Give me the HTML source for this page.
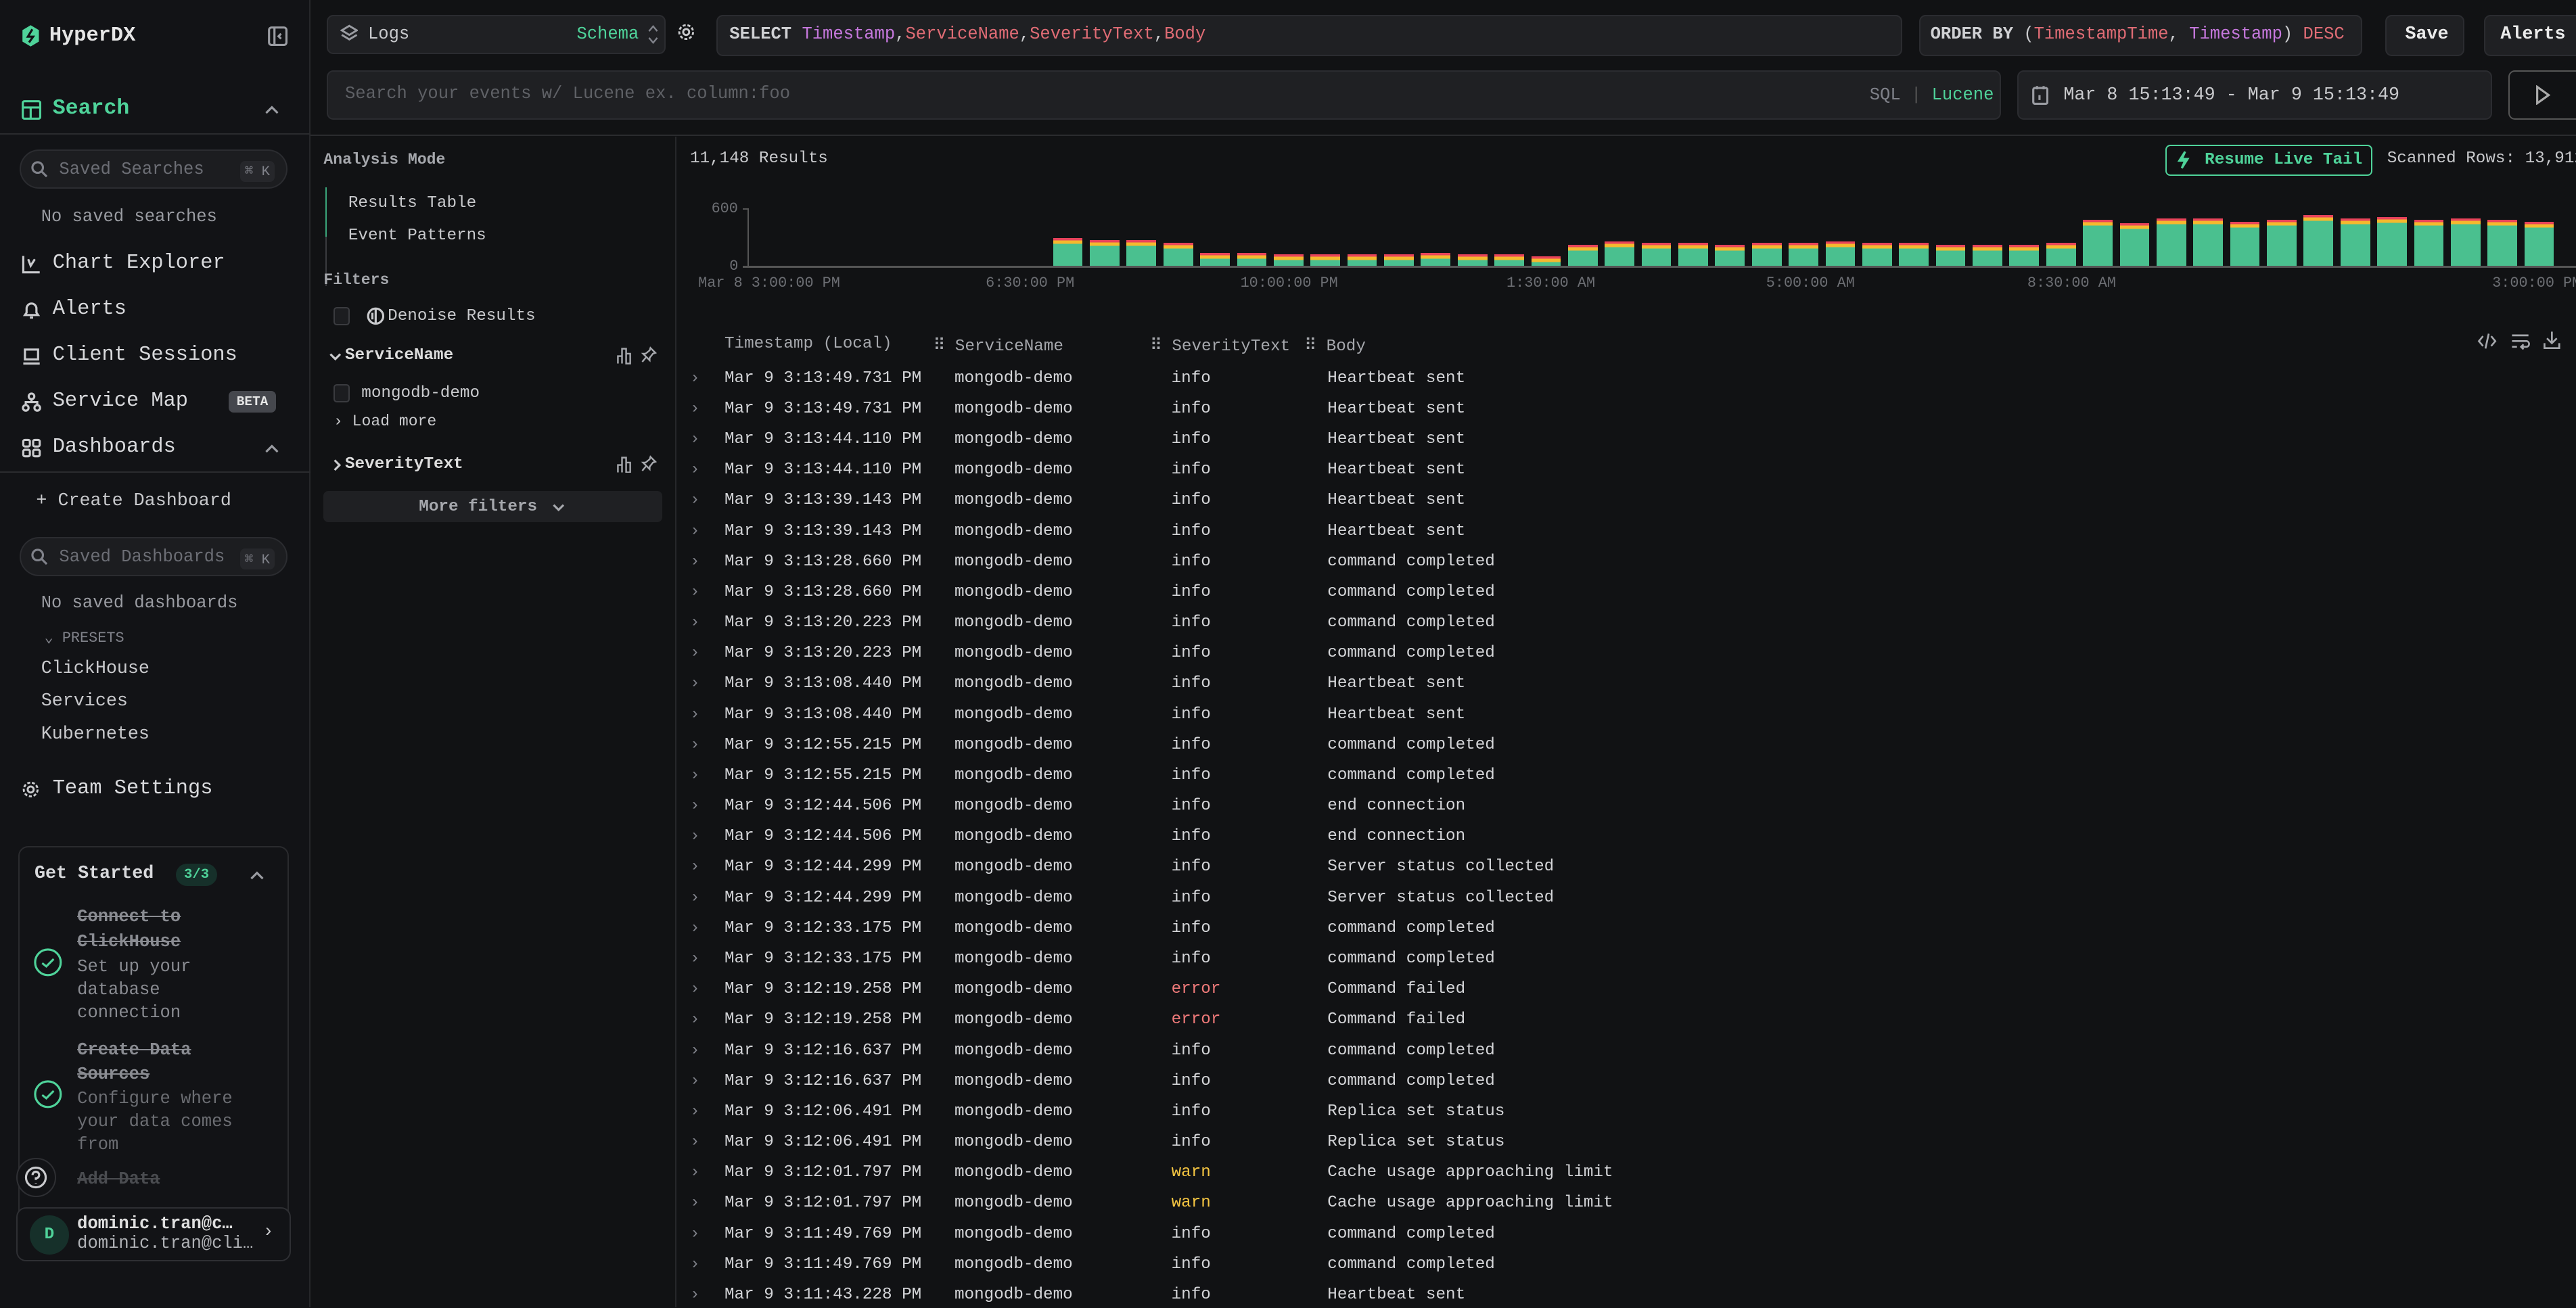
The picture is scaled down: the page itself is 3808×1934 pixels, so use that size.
<!DOCTYPE html>
<html><head><meta charset="utf-8"><style>
*{box-sizing:border-box;margin:0;padding:0}
html,body{width:3808px;height:1934px;overflow:hidden;background:#111214}
#w{zoom:2.4286;width:1568px;height:796px;position:relative;font-family:"Liberation Mono",monospace;font-size:11px;color:#c9cacd;background:#111214;overflow:hidden}
.a{position:absolute;white-space:nowrap}
.box{position:absolute;background:#1f2023;border:1px solid #2b2c30;border-radius:4px}
.g{color:#4fd39a}.m{color:#80828a}.r{color:#e06c75}.p{color:#c678dd}
.row{position:absolute;left:412px;width:1156px;height:18.6px;line-height:18.6px;font-size:10px;color:#d4d5d8}
.row span{position:absolute}
.bars{position:absolute;left:641px;top:120px;height:42px;display:flex;align-items:flex-end;gap:4.4px}
.bars div{width:18px;background:linear-gradient(#e8435a 0 1.5px,#f5b92e 1.5px 3.5px,#4ac08f 3.5px)}
svg{position:absolute;fill:none;stroke:currentColor;stroke-width:1.3}
</style></head><body><div id="w">
<!-- sidebar -->
<div class="a" style="left:0;top:0;width:189px;height:796px;background:#121316;border-right:1px solid #26272a"></div>
<svg style="left:13px;top:15px;width:11px;height:14px;color:#4fd39a" viewBox="0 0 11 14"><path d="M5.5 0.5L10.5 3.5V10.5L5.5 13.5L0.5 10.5V3.5Z" fill="#4fd39a" stroke="none"/><path d="M6.5 3L3.8 7.5H7L4.5 11" stroke="#121316" stroke-width="1.3"/></svg>
<div class="a" style="left:30px;top:15px;font-weight:bold;font-size:12.5px;color:#e6e6e6">HyperDX</div>
<svg style="left:163px;top:16px;width:12px;height:12px;color:#9a9ca2" viewBox="0 0 12 12"><rect x="0.7" y="0.7" width="10.6" height="10.6" rx="1.5"/><path d="M4 1V11M8 4.5L6.5 6L8 7.5"/></svg>
<svg style="left:13px;top:61px;width:12px;height:12px;color:#4fd39a" viewBox="0 0 12 12"><rect x="0.7" y="0.7" width="10.6" height="10.6" rx="1"/><path d="M1 4.5H11M5.5 4.5V11"/></svg>
<div class="a g" style="left:32px;top:59px;font-size:13px;font-weight:bold">Search</div>
<svg style="left:161px;top:64px;width:9px;height:6px;color:#9a9ca2" viewBox="0 0 9 6"><path d="M1 5L4.5 1.5L8 5"/></svg>
<div class="a" style="left:0;top:81px;width:189px;border-top:1px solid #2a2b2e"></div>
<div class="a" style="left:12px;top:91px;width:163px;height:24px;border-radius:12px;background:#1c1d20;border:1px solid #2b2c30"></div>
<svg style="left:19px;top:98px;width:10px;height:10px;color:#80828a" viewBox="0 0 10 10"><circle cx="4" cy="4" r="3.2"/><path d="M6.5 6.5L9.5 9.5"/></svg>
<div class="a m" style="left:36px;top:97px;font-size:10.5px;color:#6c6e75">Saved Searches</div>
<div class="a m" style="left:146px;top:98px;font-size:8.5px;background:#26272b;padding:1px 3px;border-radius:3px">⌘ K</div>
<div class="a m" style="left:25px;top:126px;font-size:10.5px;color:#9a9ca2">No saved searches</div>
<div class="a" style="left:32px;top:153px;font-size:12.5px;color:#d8d9dc">Chart Explorer</div>
<div class="a" style="left:32px;top:181px;font-size:12.5px;color:#d8d9dc">Alerts</div>
<div class="a" style="left:32px;top:209px;font-size:12.5px;color:#d8d9dc">Client Sessions</div>
<div class="a" style="left:32px;top:237px;font-size:12.5px;color:#d8d9dc">Service Map</div>
<div class="a" style="left:139px;top:238px;font-size:8px;font-weight:bold;background:#45474d;color:#e6e6e6;padding:2px 5px;border-radius:3px">BETA</div>
<div class="a" style="left:32px;top:265px;font-size:12.5px;color:#d8d9dc">Dashboards</div>
<svg style="left:161px;top:270px;width:9px;height:6px;color:#9a9ca2" viewBox="0 0 9 6"><path d="M1 5L4.5 1.5L8 5"/></svg>
<svg style="left:13px;top:155px;width:12px;height:12px;color:#c9cacd" viewBox="0 0 12 12"><path d="M1 1V11H11M4 3L5.5 7L8 3"/></svg>
<svg style="left:13px;top:183px;width:12px;height:12px;color:#c9cacd" viewBox="0 0 12 12"><path d="M2 9H10L9 7.5V5A3 3 0 0 0 3 5V7.5ZM5 10.5H7"/></svg>
<svg style="left:13px;top:211px;width:12px;height:12px;color:#c9cacd" viewBox="0 0 12 12"><rect x="2" y="2" width="8" height="6"/><path d="M1 10.5H11"/></svg>
<svg style="left:13px;top:239px;width:12px;height:12px;color:#c9cacd" viewBox="0 0 12 12"><circle cx="6" cy="2.5" r="1.7"/><circle cx="2.5" cy="9.5" r="1.7"/><circle cx="9.5" cy="9.5" r="1.7"/><path d="M6 4.2V6M2.5 7.8V6H9.5V7.8"/></svg>
<svg style="left:13px;top:267px;width:12px;height:12px;color:#c9cacd" viewBox="0 0 12 12"><rect x="1" y="1" width="4" height="4" rx="1"/><rect x="7" y="1" width="4" height="4" rx="1"/><rect x="1" y="7" width="4" height="4" rx="1"/><rect x="7" y="7" width="4" height="4" rx="1"/></svg>
<div class="a" style="left:0;top:287px;width:189px;border-top:1px solid #2a2b2e"></div>
<div class="a" style="left:22px;top:299px;font-size:11px">+ Create Dashboard</div>
<div class="a" style="left:12px;top:327px;width:163px;height:24px;border-radius:12px;background:#1c1d20;border:1px solid #2b2c30"></div>
<svg style="left:19px;top:334px;width:10px;height:10px;color:#80828a" viewBox="0 0 10 10"><circle cx="4" cy="4" r="3.2"/><path d="M6.5 6.5L9.5 9.5"/></svg>
<div class="a" style="left:36px;top:333px;font-size:10.5px;color:#6c6e75">Saved Dashboards</div>
<div class="a m" style="left:146px;top:334px;font-size:8.5px;background:#26272b;padding:1px 3px;border-radius:3px">⌘ K</div>
<div class="a" style="left:25px;top:361px;font-size:10.5px;color:#9a9ca2">No saved dashboards</div>
<div class="a m" style="left:27px;top:383px;font-size:9px">⌄ PRESETS</div>
<div class="a" style="left:25px;top:401px;font-size:11px">ClickHouse</div>
<div class="a" style="left:25px;top:421px;font-size:11px">Services</div>
<div class="a" style="left:25px;top:441px;font-size:11px">Kubernetes</div>
<svg style="left:13px;top:475px;width:11px;height:11px;color:#c9cacd" viewBox="0 0 12 12"><circle cx="6" cy="6" r="2"/><circle cx="6" cy="6" r="4.6" stroke-dasharray="2 1.2"/></svg>
<div class="a" style="left:32px;top:473px;font-size:12.5px;color:#d8d9dc">Team Settings</div>
<div class="a" style="left:11px;top:515px;width:165px;height:230px;border:1px solid #2a2b2e;border-radius:6px;border-bottom:none"></div>
<div class="a" style="left:21px;top:526px;font-size:11px;font-weight:bold;color:#d8d9dc">Get Started</div>
<div class="a g" style="left:107px;top:526px;font-size:8.5px;font-weight:bold;background:#16302a;padding:2px 5px;border-radius:8px">3/3</div>
<svg style="left:152px;top:530px;width:9px;height:6px;color:#9a9ca2" viewBox="0 0 9 6"><path d="M1 5L4.5 1.5L8 5"/></svg>
<svg style="left:20px;top:577px;width:18px;height:18px;color:#4fd39a" viewBox="0 0 18 18"><circle cx="9" cy="9" r="7.8"/><path d="M5.5 9.5L8 11.5L12.5 7"/></svg>
<svg style="left:20px;top:657px;width:18px;height:18px;color:#4fd39a" viewBox="0 0 18 18"><circle cx="9" cy="9" r="7.8"/><path d="M5.5 9.5L8 11.5L12.5 7"/></svg>
<div class="a" style="left:47px;top:551px;font-size:10.5px;line-height:15px;font-weight:bold;color:#8a8c92;text-decoration:line-through">Connect to<br>ClickHouse</div>
<div class="a" style="left:47px;top:582px;font-size:10.5px;line-height:14px;color:#8a8c92">Set up your<br>database<br>connection</div>
<div class="a" style="left:47px;top:632px;font-size:10.5px;line-height:15px;font-weight:bold;color:#8a8c92;text-decoration:line-through">Create Data<br>Sources</div>
<div class="a" style="left:47px;top:662px;font-size:10.5px;line-height:14px;color:#6c6e73">Configure where<br>your data comes<br>from</div>
<div class="a" style="left:47px;top:712px;font-size:10.5px;font-weight:bold;color:#4a4c50;text-decoration:line-through">Add Data</div>
<div class="a" style="left:10px;top:705px;width:24px;height:24px;border:1px solid #2e2f33;border-radius:12px;background:#121316"></div>
<svg style="left:15px;top:710px;width:14px;height:14px;color:#c9cacd" viewBox="0 0 14 14"><circle cx="7" cy="7" r="6"/><path d="M5 5.5A2 2 0 1 1 7 7.5V8.5M7 10.3V10.6"/></svg>
<div class="a" style="left:10px;top:735px;width:167px;height:33px;border:1px solid #2e2f33;border-radius:6px;background:#121316"></div>
<div class="a g" style="left:18px;top:740px;width:24px;height:24px;border-radius:12px;background:#16302a;text-align:center;line-height:24px;font-size:10px;font-weight:bold">D</div>
<div class="a" style="left:47px;top:739px;font-size:10.5px;font-weight:bold;color:#e0e0e0">dominic.tran@c…</div>
<div class="a" style="left:47px;top:751px;font-size:10.5px;color:#b0b2b6">dominic.tran@cli…</div>
<div class="a" style="left:160px;top:744px;color:#c9cacd">›</div>
<!-- top bar -->
<div class="box" style="left:199px;top:9px;width:206px;height:24px"></div>
<svg style="left:207px;top:15px;width:11px;height:11px;color:#9a9ca2" viewBox="0 0 12 12"><path d="M6 1L11 4L6 7L1 4ZM1 7L6 10L11 7"/></svg>
<div class="a" style="left:224px;top:15px;font-size:10.5px">Logs</div>
<div class="a g" style="left:351px;top:15px;font-size:10.5px">Schema</div>
<svg style="left:394px;top:14px;width:7px;height:14px;color:#80828a;stroke-width:1" viewBox="0 0 7 14"><path d="M1 5L3.5 2L6 5M1 9L3.5 12L6 9"/></svg>
<svg style="left:412px;top:14px;width:11px;height:11px;color:#c9cacd" viewBox="0 0 12 12"><circle cx="6" cy="6" r="2"/><circle cx="6" cy="6" r="4.6" stroke-dasharray="2 1.2"/></svg>
<div class="box" style="left:436px;top:9px;width:722px;height:25px"></div>
<div class="a" style="left:444px;top:15px;font-size:10.5px"><b style="color:#d0d1d4">SELECT</b> <span class="p">Timestamp</span>,<span class="r">ServiceName</span>,<span class="r">SeverityText</span>,<span class="r">Body</span></div>
<div class="box" style="left:1168px;top:9px;width:270px;height:25px"></div>
<div class="a" style="left:1175px;top:15px;font-size:10.5px"><b style="color:#d0d1d4">ORDER BY</b> (<span class="r">TimestampTime</span>, <span class="p">Timestamp</span>) <span class="r">DESC</span></div>
<div class="box" style="left:1452px;top:9px;width:48px;height:25px"></div>
<div class="a" style="left:1464px;top:15px;font-weight:bold;color:#ececec">Save</div>
<div class="box" style="left:1512px;top:9px;width:70px;height:25px"></div>
<div class="a" style="left:1522px;top:15px;font-weight:bold;color:#ececec">Alerts</div>
<div class="box" style="left:199px;top:43px;width:1019px;height:30px"></div>
<div class="a" style="left:210px;top:51px;font-size:10.5px;color:#5f6166">Search your events w/ Lucene ex. column:foo</div>
<div class="a" style="left:1138px;top:52px;font-size:10.5px"><span class="m">SQL</span> <span style="color:#555">|</span> <span class="g">Lucene</span></div>
<div class="box" style="left:1228px;top:43px;width:289px;height:30px"></div>
<svg style="left:1237px;top:52px;width:10px;height:12px;color:#9a9ca2" viewBox="0 0 10 12"><rect x="0.7" y="1.7" width="8.6" height="9.6" rx="1"/><path d="M3 0.5V2.5M7 0.5V2.5M4.5 6V9"/></svg>
<div class="a" style="left:1256px;top:52px;font-size:11px">Mar 8 15:13:49 - Mar 9 15:13:49</div>
<div class="a" style="left:1527px;top:43px;width:50px;height:30px;border:1px solid #555;border-radius:4px"></div>
<svg style="left:1543px;top:52px;width:10px;height:12px;color:#aaa" viewBox="0 0 10 12"><path d="M1.5 1L8.5 6L1.5 11Z"/></svg>
<div class="a" style="left:189px;top:82px;width:1379px;border-top:1px solid #2a2b2e"></div>
<!-- filters -->
<div class="a" style="left:411px;top:83px;height:713px;border-left:1px solid #26272a"></div>
<div class="a" style="left:197px;top:92px;font-size:9.5px;font-weight:bold;color:#a6a8ad">Analysis Mode</div>
<div class="a" style="left:198px;top:114px;height:60px;border-left:1px solid #3a3b3f"></div>
<div class="a" style="left:198px;top:114px;height:30px;border-left:1px solid #3aa57a"></div>
<div class="a" style="left:212px;top:118px;font-size:10px">Results Table</div>
<div class="a" style="left:212px;top:138px;font-size:10px">Event Patterns</div>
<div class="a" style="left:197px;top:165px;font-size:9.5px;font-weight:bold;color:#a6a8ad">Filters</div>
<div class="a" style="left:203px;top:187px;width:10px;height:11px;border:1px solid #3a3b3f;border-radius:2px;background:#1c1d20"></div>
<svg style="left:223px;top:187px;width:11px;height:11px;color:#c9cacd" viewBox="0 0 11 11"><circle cx="5.5" cy="5.5" r="4.6"/><path d="M5.5 1V10M3.5 3.5V7.5"/></svg>
<div class="a" style="left:236px;top:187px;font-size:10px">Denoise Results</div>
<svg style="left:200px;top:214px;width:8px;height:6px;color:#c9cacd" viewBox="0 0 8 6"><path d="M1 1.5L4 4.5L7 1.5"/></svg>
<div class="a" style="left:210px;top:211px;font-size:10px;font-weight:bold;color:#ddd">ServiceName</div>
<svg style="left:375px;top:211px;width:10px;height:11px;color:#a6a8ad;stroke-width:1" viewBox="0 0 10 11"><path d="M1 10.5V6H3.5V10.5M3.5 10.5V1.5H6V10.5M6 10.5V4.5H8.5V10.5Z"/></svg>
<svg style="left:390px;top:211px;width:10px;height:11px;color:#a6a8ad;stroke-width:1" viewBox="0 0 10 11"><path d="M6 1L9 4L7.5 4.5L5.5 7L5.5 8.5L1.5 4.5H3L5.5 2.5ZM3.5 6.5L1 9.5"/></svg>
<div class="a" style="left:203px;top:234px;width:10px;height:11px;border:1px solid #3a3b3f;border-radius:2px;background:#1c1d20"></div>
<div class="a" style="left:220px;top:234px;font-size:10px">mongodb-demo</div>
<div class="a" style="left:203px;top:251px;font-size:9.5px">›  Load more</div>
<svg style="left:202px;top:279px;width:6px;height:8px;color:#c9cacd" viewBox="0 0 6 8"><path d="M1.5 1L4.5 4L1.5 7"/></svg>
<div class="a" style="left:210px;top:277px;font-size:10px;font-weight:bold;color:#ddd">SeverityText</div>
<svg style="left:375px;top:277px;width:10px;height:11px;color:#a6a8ad;stroke-width:1" viewBox="0 0 10 11"><path d="M1 10.5V6H3.5V10.5M3.5 10.5V1.5H6V10.5M6 10.5V4.5H8.5V10.5Z"/></svg>
<svg style="left:390px;top:277px;width:10px;height:11px;color:#a6a8ad;stroke-width:1" viewBox="0 0 10 11"><path d="M6 1L9 4L7.5 4.5L5.5 7L5.5 8.5L1.5 4.5H3L5.5 2.5ZM3.5 6.5L1 9.5"/></svg>
<div class="a" style="left:197px;top:299px;width:206px;height:19px;background:#1f2023;border-radius:3px"></div>
<div class="a" style="left:255px;top:303px;font-size:10px;font-weight:bold;color:#a6a8ad">More filters</div>
<svg style="left:336px;top:306px;width:8px;height:6px;color:#a6a8ad" viewBox="0 0 8 6"><path d="M1 1.5L4 4.5L7 1.5"/></svg>
<!-- results -->
<div class="a" style="left:420px;top:91px;font-size:10px">11,148 Results</div>
<div class="a" style="left:1318px;top:88px;width:126px;height:19px;border:1px solid #4fd39a;border-radius:3px"></div>
<svg style="left:1325px;top:92px;width:8px;height:11px;color:#4fd39a" viewBox="0 0 8 11"><path d="M5 0.5L1.5 6H5L3 10.5L6.5 5H3Z"/></svg>
<div class="a g" style="left:1342px;top:92px;font-size:10px;font-weight:bold">Resume Live Tail</div>
<div class="a" style="left:1453px;top:91px;font-size:10px">Scanned Rows: 13,912</div>
<div class="a" style="left:433px;top:122px;font-size:9px;color:#6c6e73">600</div>
<div class="a" style="left:444px;top:157px;font-size:9px;color:#6c6e73">0</div>
<div class="a" style="left:455px;top:127px;height:36px;border-left:1px solid #555"></div>
<div class="a" style="left:452px;top:127px;width:4px;border-top:1px solid #555"></div>
<div class="a" style="left:452px;top:162px;width:1116px;border-top:1.5px solid #555"></div>
<div class="bars">
<div style="height:17px"></div><div style="height:16px"></div><div style="height:16px"></div><div style="height:14px"></div>
<div style="height:8px"></div><div style="height:8px"></div><div style="height:7px"></div><div style="height:7px"></div><div style="height:7px"></div><div style="height:7px"></div><div style="height:8px"></div><div style="height:7px"></div><div style="height:7px"></div><div style="height:6px"></div>
<div style="height:13px"></div><div style="height:15px"></div><div style="height:14px"></div><div style="height:14px"></div><div style="height:13px"></div><div style="height:14px"></div><div style="height:14px"></div><div style="height:15px"></div><div style="height:14px"></div><div style="height:14px"></div><div style="height:13px"></div><div style="height:13px"></div><div style="height:13px"></div><div style="height:14px"></div>
<div style="height:28px"></div><div style="height:26px"></div><div style="height:29px"></div><div style="height:29px"></div><div style="height:27px"></div><div style="height:28px"></div><div style="height:31px"></div><div style="height:29px"></div><div style="height:30px"></div><div style="height:28px"></div><div style="height:29px"></div><div style="height:28px"></div><div style="height:27px"></div>
</div>
<div class="a" style="left:425px;top:167px;font-size:9px;color:#6c6e73">Mar 8 3:00:00 PM</div>
<div class="a" style="left:600px;top:167px;font-size:9px;color:#6c6e73">6:30:00 PM</div>
<div class="a" style="left:755px;top:167px;font-size:9px;color:#6c6e73">10:00:00 PM</div>
<div class="a" style="left:917px;top:167px;font-size:9px;color:#6c6e73">1:30:00 AM</div>
<div class="a" style="left:1075px;top:167px;font-size:9px;color:#6c6e73">5:00:00 AM</div>
<div class="a" style="left:1234px;top:167px;font-size:9px;color:#6c6e73">8:30:00 AM</div>
<div class="a" style="left:1517px;top:167px;font-size:9px;color:#6c6e73">3:00:00 PM</div>
<div class="a" style="left:441px;top:204px;font-size:10px;color:#a6a8ad">Timestamp (Local)</div>
<div class="a" style="left:568px;top:204px;font-size:10px;color:#a6a8ad">⠿ ServiceName</div>
<div class="a" style="left:700px;top:204px;font-size:10px;color:#a6a8ad">⠿ SeverityText</div>
<div class="a" style="left:794px;top:204px;font-size:10px;color:#a6a8ad">⠿ Body</div>
<svg style="left:1508px;top:202px;width:12px;height:11px;color:#a6a8ad;stroke-width:1.1" viewBox="0 0 12 11"><path d="M3.5 2.5L1 5.5L3.5 8.5M8.5 2.5L11 5.5L8.5 8.5M7 1L5 10"/></svg>
<svg style="left:1528px;top:202px;width:12px;height:11px;color:#a6a8ad;stroke-width:1.1" viewBox="0 0 12 11"><path d="M1 2H11M1 5.5H10A1.8 1.8 0 0 1 10 9H7M8 7.5L6.5 9L8 10.5M1 9H4"/></svg>
<svg style="left:1548px;top:201px;width:11px;height:12px;color:#a6a8ad;stroke-width:1.1" viewBox="0 0 11 12"><path d="M5.5 1V8M2.5 5L5.5 8L8.5 5M1 8V11H10V8"/></svg>
<div style="position:absolute;left:0;top:221px">
<div class="row" style="top:0px"><span class="m" style="left:8px">›</span><span style="left:29px">Mar 9 3:13:49.731 PM</span><span style="left:169px">mongodb-demo</span><span style="left:301px">info</span><span style="left:396px">Heartbeat sent</span></div>
<div class="row" style="top:18.6px"><span class="m" style="left:8px">›</span><span style="left:29px">Mar 9 3:13:49.731 PM</span><span style="left:169px">mongodb-demo</span><span style="left:301px">info</span><span style="left:396px">Heartbeat sent</span></div>
<div class="row" style="top:37.2px"><span class="m" style="left:8px">›</span><span style="left:29px">Mar 9 3:13:44.110 PM</span><span style="left:169px">mongodb-demo</span><span style="left:301px">info</span><span style="left:396px">Heartbeat sent</span></div>
<div class="row" style="top:55.8px"><span class="m" style="left:8px">›</span><span style="left:29px">Mar 9 3:13:44.110 PM</span><span style="left:169px">mongodb-demo</span><span style="left:301px">info</span><span style="left:396px">Heartbeat sent</span></div>
<div class="row" style="top:74.4px"><span class="m" style="left:8px">›</span><span style="left:29px">Mar 9 3:13:39.143 PM</span><span style="left:169px">mongodb-demo</span><span style="left:301px">info</span><span style="left:396px">Heartbeat sent</span></div>
<div class="row" style="top:93px"><span class="m" style="left:8px">›</span><span style="left:29px">Mar 9 3:13:39.143 PM</span><span style="left:169px">mongodb-demo</span><span style="left:301px">info</span><span style="left:396px">Heartbeat sent</span></div>
<div class="row" style="top:111.6px"><span class="m" style="left:8px">›</span><span style="left:29px">Mar 9 3:13:28.660 PM</span><span style="left:169px">mongodb-demo</span><span style="left:301px">info</span><span style="left:396px">command completed</span></div>
<div class="row" style="top:130.2px"><span class="m" style="left:8px">›</span><span style="left:29px">Mar 9 3:13:28.660 PM</span><span style="left:169px">mongodb-demo</span><span style="left:301px">info</span><span style="left:396px">command completed</span></div>
<div class="row" style="top:148.8px"><span class="m" style="left:8px">›</span><span style="left:29px">Mar 9 3:13:20.223 PM</span><span style="left:169px">mongodb-demo</span><span style="left:301px">info</span><span style="left:396px">command completed</span></div>
<div class="row" style="top:167.4px"><span class="m" style="left:8px">›</span><span style="left:29px">Mar 9 3:13:20.223 PM</span><span style="left:169px">mongodb-demo</span><span style="left:301px">info</span><span style="left:396px">command completed</span></div>
<div class="row" style="top:186px"><span class="m" style="left:8px">›</span><span style="left:29px">Mar 9 3:13:08.440 PM</span><span style="left:169px">mongodb-demo</span><span style="left:301px">info</span><span style="left:396px">Heartbeat sent</span></div>
<div class="row" style="top:204.6px"><span class="m" style="left:8px">›</span><span style="left:29px">Mar 9 3:13:08.440 PM</span><span style="left:169px">mongodb-demo</span><span style="left:301px">info</span><span style="left:396px">Heartbeat sent</span></div>
<div class="row" style="top:223.2px"><span class="m" style="left:8px">›</span><span style="left:29px">Mar 9 3:12:55.215 PM</span><span style="left:169px">mongodb-demo</span><span style="left:301px">info</span><span style="left:396px">command completed</span></div>
<div class="row" style="top:241.8px"><span class="m" style="left:8px">›</span><span style="left:29px">Mar 9 3:12:55.215 PM</span><span style="left:169px">mongodb-demo</span><span style="left:301px">info</span><span style="left:396px">command completed</span></div>
<div class="row" style="top:260.4px"><span class="m" style="left:8px">›</span><span style="left:29px">Mar 9 3:12:44.506 PM</span><span style="left:169px">mongodb-demo</span><span style="left:301px">info</span><span style="left:396px">end connection</span></div>
<div class="row" style="top:279px"><span class="m" style="left:8px">›</span><span style="left:29px">Mar 9 3:12:44.506 PM</span><span style="left:169px">mongodb-demo</span><span style="left:301px">info</span><span style="left:396px">end connection</span></div>
<div class="row" style="top:297.6px"><span class="m" style="left:8px">›</span><span style="left:29px">Mar 9 3:12:44.299 PM</span><span style="left:169px">mongodb-demo</span><span style="left:301px">info</span><span style="left:396px">Server status collected</span></div>
<div class="row" style="top:316.2px"><span class="m" style="left:8px">›</span><span style="left:29px">Mar 9 3:12:44.299 PM</span><span style="left:169px">mongodb-demo</span><span style="left:301px">info</span><span style="left:396px">Server status collected</span></div>
<div class="row" style="top:334.8px"><span class="m" style="left:8px">›</span><span style="left:29px">Mar 9 3:12:33.175 PM</span><span style="left:169px">mongodb-demo</span><span style="left:301px">info</span><span style="left:396px">command completed</span></div>
<div class="row" style="top:353.4px"><span class="m" style="left:8px">›</span><span style="left:29px">Mar 9 3:12:33.175 PM</span><span style="left:169px">mongodb-demo</span><span style="left:301px">info</span><span style="left:396px">command completed</span></div>
<div class="row" style="top:372px"><span class="m" style="left:8px">›</span><span style="left:29px">Mar 9 3:12:19.258 PM</span><span style="left:169px">mongodb-demo</span><span style="left:301px;color:#f07a7a">error</span><span style="left:396px">Command failed</span></div>
<div class="row" style="top:390.6px"><span class="m" style="left:8px">›</span><span style="left:29px">Mar 9 3:12:19.258 PM</span><span style="left:169px">mongodb-demo</span><span style="left:301px;color:#f07a7a">error</span><span style="left:396px">Command failed</span></div>
<div class="row" style="top:409.2px"><span class="m" style="left:8px">›</span><span style="left:29px">Mar 9 3:12:16.637 PM</span><span style="left:169px">mongodb-demo</span><span style="left:301px">info</span><span style="left:396px">command completed</span></div>
<div class="row" style="top:427.8px"><span class="m" style="left:8px">›</span><span style="left:29px">Mar 9 3:12:16.637 PM</span><span style="left:169px">mongodb-demo</span><span style="left:301px">info</span><span style="left:396px">command completed</span></div>
<div class="row" style="top:446.4px"><span class="m" style="left:8px">›</span><span style="left:29px">Mar 9 3:12:06.491 PM</span><span style="left:169px">mongodb-demo</span><span style="left:301px">info</span><span style="left:396px">Replica set status</span></div>
<div class="row" style="top:465px"><span class="m" style="left:8px">›</span><span style="left:29px">Mar 9 3:12:06.491 PM</span><span style="left:169px">mongodb-demo</span><span style="left:301px">info</span><span style="left:396px">Replica set status</span></div>
<div class="row" style="top:483.6px"><span class="m" style="left:8px">›</span><span style="left:29px">Mar 9 3:12:01.797 PM</span><span style="left:169px">mongodb-demo</span><span style="left:301px;color:#f5c542">warn</span><span style="left:396px">Cache usage approaching limit</span></div>
<div class="row" style="top:502.2px"><span class="m" style="left:8px">›</span><span style="left:29px">Mar 9 3:12:01.797 PM</span><span style="left:169px">mongodb-demo</span><span style="left:301px;color:#f5c542">warn</span><span style="left:396px">Cache usage approaching limit</span></div>
<div class="row" style="top:520.8px"><span class="m" style="left:8px">›</span><span style="left:29px">Mar 9 3:11:49.769 PM</span><span style="left:169px">mongodb-demo</span><span style="left:301px">info</span><span style="left:396px">command completed</span></div>
<div class="row" style="top:539.4px"><span class="m" style="left:8px">›</span><span style="left:29px">Mar 9 3:11:49.769 PM</span><span style="left:169px">mongodb-demo</span><span style="left:301px">info</span><span style="left:396px">command completed</span></div>
<div class="row" style="top:558px"><span class="m" style="left:8px">›</span><span style="left:29px">Mar 9 3:11:43.228 PM</span><span style="left:169px">mongodb-demo</span><span style="left:301px">info</span><span style="left:396px">Heartbeat sent</span></div>
</div>
</div></body></html>
